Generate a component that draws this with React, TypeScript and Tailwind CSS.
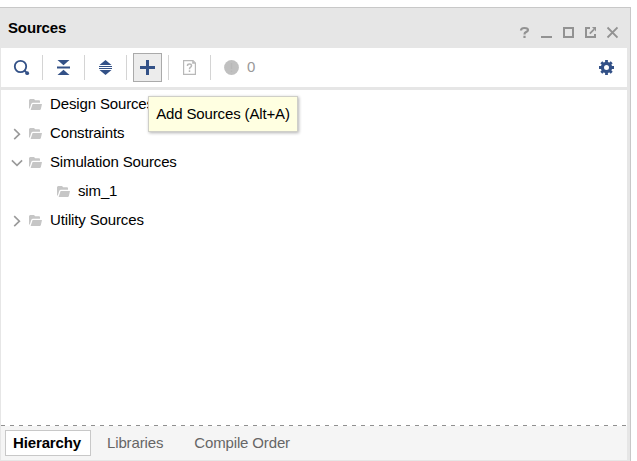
import type { ReactNode } from "react";

const NAVY = "#335187";

function Cell({ children }: { children: ReactNode }) {
  return (
    <div className="flex h-[25px] w-[42px] items-center justify-center border-r border-[#d4d4d4]">
      {children}
    </div>
  );
}

function Folder() {
  return (
    <svg width="13" height="11" viewBox="0 0 13 11" fill="#c6c6c6" className="shrink-0">
      <path d="M0 9.5V1L1 0H5L6.2 1.3H10.4L11 2V3.7H3.6L2.4 4.6L0.8 9.5Z" />
      <path d="M3.6 5H13L11.8 10.2L11 11H1.6Z" />
    </svg>
  );
}

function Chevron({ open }: { open: boolean }) {
  return (
    <svg width="12" height="12" viewBox="0 0 12 12" fill="none" stroke="#9a9a9a" strokeWidth="1.6" className="shrink-0">
      <path d={open ? "M0.9 3.4L6 8.4L11.1 3.4" : "M3.2 1.2L8.4 6.2L3.2 11.2"} />
    </svg>
  );
}

type Row = { label: string; state?: "open" | "closed"; nested?: boolean };

const rows: Row[] = [
  { label: "Design Sources" },
  { label: "Constraints", state: "closed" },
  { label: "Simulation Sources", state: "open" },
  { label: "sim_1", nested: true },
  { label: "Utility Sources", state: "closed" },
];

function TreeRow({ label, state, nested }: Row) {
  return (
    <div className={`flex h-[29px] items-center ${nested ? "pl-[38px]" : "pl-[10px]"}`}>
      <div className="flex w-[18px] shrink-0">{state && <Chevron open={state === "open"} />}</div>
      <Folder />
      <span className="ml-2 pb-0.5 whitespace-nowrap">{label}</span>
    </div>
  );
}

function Header() {
  return (
    <header className="flex h-10 shrink-0 items-center justify-between pr-3 pl-[7px]">
      <h1 className="text-[15px] font-bold">Sources</h1>
      <svg width="100" height="14" viewBox="0 0 100 14" fill="none" stroke="#929292" strokeWidth="2" className="mt-2">
        <path d="M3 5.4Q3 3 6.4 3Q10 3 10 5.1Q10 6.4 8 7.1Q6.5 7.7 6.5 9.6M6.5 10.8V13" strokeWidth="2.2" />
        <path d="M23 12H34" />
        <path d="M46 3H55V12H46Z" />
        <path d="M72 3H68V12H77V9" />
        <path d="M71.8 8.6L76 4.4" strokeWidth="1.7" />
        <path d="M74 2H78V6.5Z" fill="#929292" stroke="none" />
        <path d="M89.5 2.5L99.5 12.5M99.5 2.5L89.5 12.5" strokeWidth="1.8" />
      </svg>
    </header>
  );
}

function Toolbar() {
  return (
    <div className="flex h-[39px] shrink-0 items-center bg-white">
      <Cell>
        <svg width="17" height="17" viewBox="0 0 17 17" fill="none" stroke={NAVY}>
          <circle cx="7.5" cy="7.5" r="5.7" strokeWidth="1.8" />
          <path d="M11.4 11.4L13.2 13.2" strokeWidth="2" />
          <circle cx="14.2" cy="14.2" r="1.9" fill={NAVY} stroke="none" />
        </svg>
      </Cell>
      <Cell>
        <svg width="13" height="15" viewBox="0 0 13 15" fill={NAVY}>
          <path d="M0.5 0H12.5L6.5 5.2Z" />
          <path d="M0 6.5H13V8.5H0Z" />
          <path d="M0.5 15H12.5L6.5 9.8Z" />
        </svg>
      </Cell>
      <Cell>
        <svg width="13" height="15" viewBox="0 0 13 15" fill={NAVY}>
          <path d="M0.5 5L6.5 0L12.5 5Z" />
          <path d="M0 6H13V7H0ZM0 8H13V9H0Z" />
          <path d="M0.5 10H12.5L6.5 15Z" />
        </svg>
      </Cell>
      <Cell>
        <button className="flex size-[29px] shrink-0 items-center justify-center border border-[#aaa] bg-[#ececec]">
          <svg width="15" height="15" viewBox="0 0 15 15" fill={NAVY}>
            <path d="M6 0H9V6H15V9H9V15H6V9H0V6H6Z" />
          </svg>
        </button>
      </Cell>
      <Cell>
        <svg width="13" height="15" viewBox="0 0 13 15" fill="none" stroke="#b8b8b8">
          <path d="M0.6 0.6H10L12.4 3V14.4H0.6Z" strokeWidth="1.2" />
          <path d="M9.2 0.5V3.8H12.5Z" fill="#b8b8b8" stroke="none" />
          <path d="M4.5 6V5.5Q4.5 4 6.5 4Q8.5 4 8.5 5.7Q8.5 6.7 7.3 7.3Q6.5 7.8 6.5 9.3M6.5 10.3V12" strokeWidth="1.5" />
        </svg>
      </Cell>
      <div className="flex items-center pl-[13px]">
        <svg width="15" height="15" viewBox="0 0 15 15">
          <circle cx="7.5" cy="7.5" r="7.4" fill="#c0c0c0" />
          <path d="M7.5 3V9M7.5 10.5V12" stroke="#b8b8b8" strokeWidth="1.5" />
        </svg>
        <span className="ml-2 pb-0.5 text-[#999]">0</span>
      </div>
      <svg width="15" height="15" viewBox="0 0 15 15" fill="none" stroke={NAVY} className="mr-[13px] ml-auto">
        <circle cx="7.5" cy="7.5" r="4.1" strokeWidth="3.2" />
        <path d="M7.5 0V3M7.5 12V15M0 7.5H3M12 7.5H15M2.3 2.3L4.3 4.3M10.7 10.7L12.7 12.7M12.7 2.3L10.7 4.3M4.3 10.7L2.3 12.7" strokeWidth="2.8" />
      </svg>
    </div>
  );
}

export default function App() {
  return (
    <div className="h-[461px] w-[637px] overflow-hidden bg-white pt-[7px] font-['Liberation_Sans',Arial,sans-serif] text-[15px] leading-[18px] tracking-[-0.14px] text-black">
      <div className="flex h-[454px] w-[631px] flex-col border-t border-r border-[#c8c8c8] bg-[#e6e6e6] pl-px">
        <Header />
        <div className="mr-[3px] flex min-h-0 grow flex-col">
          <Toolbar />
          <main className="relative mt-[3px] grow bg-white">
            {rows.map((row) => (
              <TreeRow key={row.label} {...row} />
            ))}
            <div
              role="tooltip"
              className="absolute top-[6px] left-[147px] flex h-[36px] w-[150px] items-center justify-center border border-[#cfcfc8] bg-[#ffffe1] whitespace-nowrap shadow-[1px_1px_3px_rgba(0,0,0,0.3)]"
            >
              Add Sources (Alt+A)
            </div>
          </main>
          <div className="h-px shrink-0 bg-white bg-[repeating-linear-gradient(90deg,#909090_0px,#909090_4px,transparent_4px,transparent_9px)]" />
          <nav className="mb-px flex h-[34px] shrink-0 items-center bg-[#f5f5f5] pl-1 text-[#666]">
            <div className="flex h-[26px] w-[86px] items-center justify-center border border-[#c8c8c8] bg-white pr-0.5 font-bold text-black">
              Hierarchy
            </div>
            <div className="ml-4">Libraries</div>
            <div className="ml-[31px]">Compile Order</div>
          </nav>
        </div>
      </div>
    </div>
  );
}
